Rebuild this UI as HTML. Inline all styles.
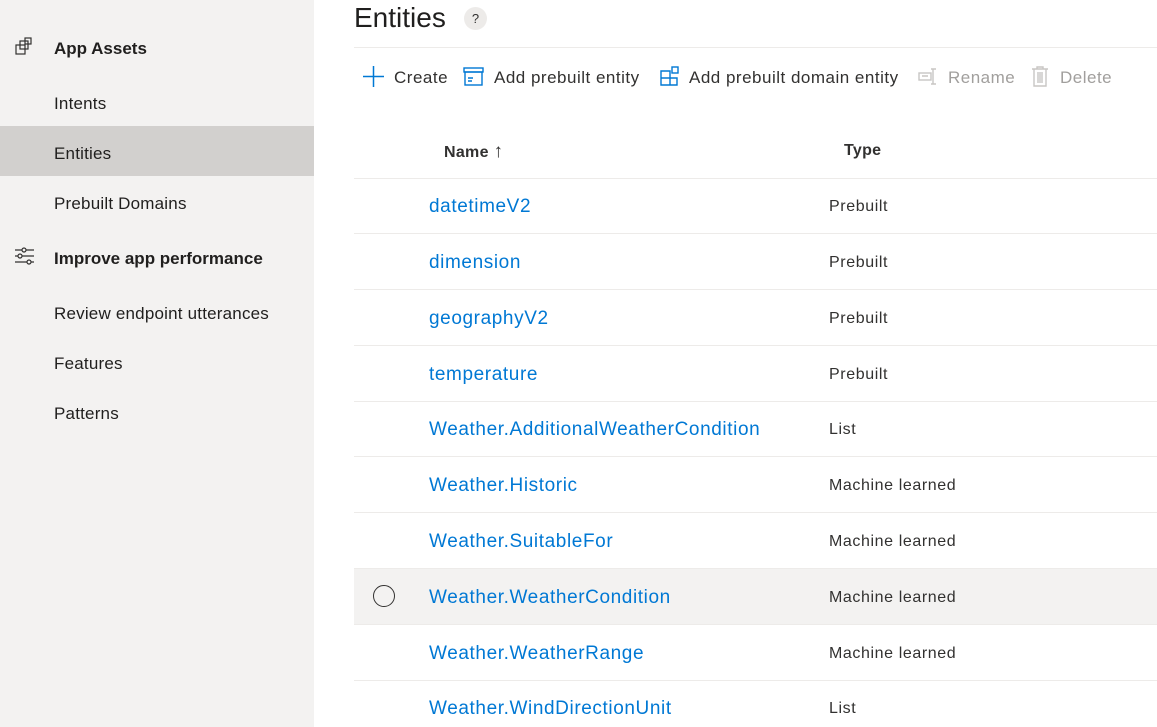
<!DOCTYPE html>
<html><head><style>
*{margin:0;padding:0;box-sizing:border-box}
html,body{width:1157px;height:727px;overflow:hidden}
body{background:#fff;font-family:"Liberation Sans",sans-serif;color:#323130;position:relative}
.side{position:absolute;left:0;top:0;width:314px;height:727px;background:#f3f2f1}
.si{position:absolute;left:54px;font-size:17px;letter-spacing:0.2px;color:#201f1e}
.sh{font-weight:bold;font-size:17px;letter-spacing:0}
.sel{position:absolute;left:0;top:126px;width:314px;height:50px;background:#d2d0ce}
.abs{position:absolute}
.tb{position:absolute;top:68px;font-size:17px;letter-spacing:0.5px;color:#323130}
.row{position:absolute;left:354px;width:803px;height:56px;border-bottom:1px solid #edebe9}
.row .n{position:absolute;left:75px;top:18px;font-size:19px;letter-spacing:0.6px;color:#0078d4}
.row .t{position:absolute;left:475px;top:20px;font-size:16px;letter-spacing:0.6px;color:#323130}
</style></head><body>
<div class="side">
<div class="sel"></div>
<svg class="abs" style="left:15px;top:37px" width="20" height="20" viewBox="0 0 20 20" fill="none" stroke="#323130" stroke-width="1.2"><rect x="1" y="8" width="9" height="9"/><rect x="5" y="4" width="8" height="8"/><rect x="10" y="1" width="6" height="6"/></svg>
<div class="si sh" style="top:39px">App Assets</div>
<div class="si" style="top:94px">Intents</div>
<div class="si" style="top:144px">Entities</div>
<div class="si" style="top:194px">Prebuilt Domains</div>
<svg class="abs" style="left:15px;top:247px" width="20" height="18" viewBox="0 0 20 18" fill="none" stroke="#323130" stroke-width="1.2"><path d="M0 3H19M0 9H19M0 15H19"/><circle cx="9" cy="3" r="2" fill="#f3f2f1"/><circle cx="5" cy="9" r="2" fill="#f3f2f1"/><circle cx="14" cy="15" r="2" fill="#f3f2f1"/></svg>
<div class="si sh" style="top:249px">Improve app performance</div>
<div class="si" style="top:304px">Review endpoint utterances</div>
<div class="si" style="top:354px">Features</div>
<div class="si" style="top:404px">Patterns</div>
</div>
<div class="abs" style="left:354px;top:2px;font-size:28px;color:#201f1e">Entities</div>
<div class="abs" style="left:464px;top:7px;width:23px;height:23px;border-radius:50%;background:#edebe9;font-size:13px;text-align:center;line-height:23px">?</div>
<div class="abs" style="left:354px;top:47px;width:803px;height:1px;background:#edebe9"></div>
<svg class="abs" style="left:363px;top:66px" width="21" height="21" viewBox="0 0 21 21" stroke="#0078d4" stroke-width="1.5"><path d="M10.5 0V21M0 10.5H21"/></svg>
<div class="tb" style="left:394px">Create</div>
<svg class="abs" style="left:463px;top:67px" width="21" height="19" viewBox="0 0 21 19" fill="none" stroke="#0078d4" stroke-width="1.4"><rect x="1" y="1" width="19" height="4"/><rect x="2" y="5" width="17" height="13"/><path d="M5 11H10M5 14H9"/></svg>
<div class="tb" style="left:494px">Add prebuilt entity</div>
<svg class="abs" style="left:660px;top:66px" width="20" height="20" viewBox="0 0 20 20" fill="none" stroke="#0078d4" stroke-width="1.4"><path d="M1 5H10V19H1ZM1 12H17V19H10M10 12V5"/><rect x="12" y="1" width="6" height="6"/></svg>
<div class="tb" style="left:689px">Add prebuilt domain entity</div>
<svg class="abs" style="left:918px;top:68px" width="20" height="18" viewBox="0 0 20 18" fill="none" stroke="#c8c6c4" stroke-width="1.4"><rect x="1" y="5" width="12" height="7"/><path d="M4 8H10M15 1V16M13 1H18M13 16H18"/></svg>
<div class="tb" style="left:948px;color:#a19f9d">Rename</div>
<svg class="abs" style="left:1031px;top:66px" width="18" height="21" viewBox="0 0 18 21" fill="none" stroke="#c8c6c4" stroke-width="1.4"><path d="M1 3H17M6 3V1H12V3M3 3V20H15V3M7 6V17M9 6V17M11 6V17"/></svg>
<div class="tb" style="left:1060px;color:#a19f9d">Delete</div>
<div class="row" style="top:123px"><div class="abs" style="left:90px;top:18px;font-size:16px;font-weight:bold;color:#323130;letter-spacing:0.3px">Name <span style="font-weight:normal;font-size:19px">↑</span></div><div class="abs" style="left:490px;top:19px;font-size:16px;font-weight:bold;letter-spacing:0.3px">Type</div></div>
<div class="row" style="top:178px"><div class="n">datetimeV2</div><div class="t">Prebuilt</div></div>
<div class="row" style="top:234px"><div class="n">dimension</div><div class="t">Prebuilt</div></div>
<div class="row" style="top:290px"><div class="n">geographyV2</div><div class="t">Prebuilt</div></div>
<div class="row" style="top:346px"><div class="n">temperature</div><div class="t">Prebuilt</div></div>
<div class="row" style="top:401px"><div class="n">Weather.AdditionalWeatherCondition</div><div class="t">List</div></div>
<div class="row" style="top:457px"><div class="n">Weather.Historic</div><div class="t">Machine learned</div></div>
<div class="row" style="top:513px"><div class="n">Weather.SuitableFor</div><div class="t">Machine learned</div></div>
<div class="row" style="top:569px;background:#f3f2f1"><div class="abs" style="left:19px;top:16px;width:22px;height:22px;border:1px solid #323130;border-radius:50%"></div><div class="n">Weather.WeatherCondition</div><div class="t">Machine learned</div></div>
<div class="row" style="top:625px"><div class="n">Weather.WeatherRange</div><div class="t">Machine learned</div></div>
<div class="row" style="top:680px"><div class="n">Weather.WindDirectionUnit</div><div class="t">List</div></div>
</body></html>
